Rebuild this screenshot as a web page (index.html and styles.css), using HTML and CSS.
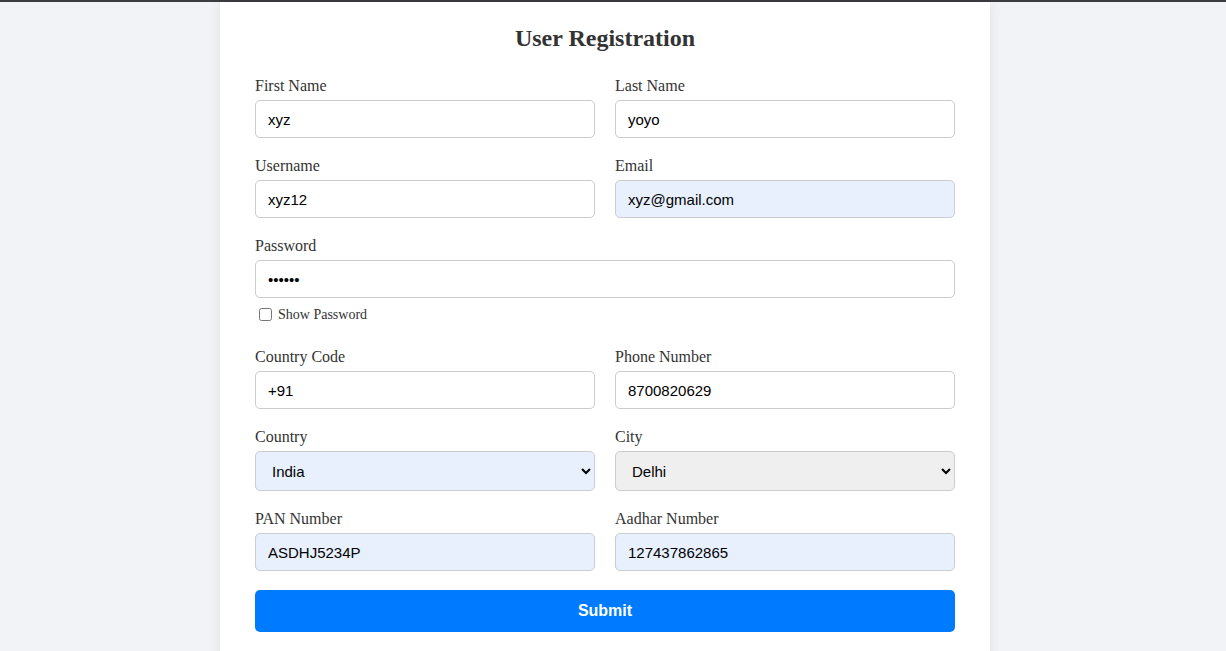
FILE: index.html
```html
<!DOCTYPE html>
<html lang="en">
<head>
<meta charset="utf-8">
<title>User Registration</title>
<link rel="stylesheet" href="styles.css">
</head>
<body>
<div class="topline"></div>
<main class="card">
  <h2 class="title">User Registration</h2>
  <form class="form">
    <div class="group">
      <label class="label">First Name</label>
      <input class="field" type="text" value="xyz">
    </div>
    <div class="group">
      <label class="label">Last Name</label>
      <input class="field" type="text" value="yoyo">
    </div>
    <div class="group">
      <label class="label">Username</label>
      <input class="field" type="text" value="xyz12">
    </div>
    <div class="group">
      <label class="label">Email</label>
      <input class="field filled" type="text" value="xyz@gmail.com">
    </div>
    <div class="group full">
      <label class="label">Password</label>
      <input class="field" type="password" value="secret">
      <div class="show-row">
        <input class="check" type="checkbox" id="show">
        <label class="show-label" for="show">Show Password</label>
      </div>
    </div>
    <div class="group">
      <label class="label">Country Code</label>
      <input class="field" type="text" value="+91">
    </div>
    <div class="group">
      <label class="label">Phone Number</label>
      <input class="field" type="text" value="8700820629">
    </div>
    <div class="group">
      <label class="label">Country</label>
      <select class="field select filled"><option>India</option></select>
    </div>
    <div class="group">
      <label class="label">City</label>
      <select class="field select grey"><option>Delhi</option></select>
    </div>
    <div class="group">
      <label class="label">PAN Number</label>
      <input class="field filled" type="text" value="ASDHJ5234P">
    </div>
    <div class="group">
      <label class="label">Aadhar Number</label>
      <input class="field filled" type="text" value="127437862865">
    </div>
    <div class="group full">
      <button class="submit" type="button">Submit</button>
    </div>
  </form>
</main>
</body>
</html>
```
FILE: styles.css
```css
html, body {
  margin: 0;
  padding: 0;
}
body {
  background: #f2f3f7;
  font-family: "Liberation Serif", "Times New Roman", serif;
  color: #333;
  height: 651px;
  overflow: hidden;
  padding-right: 16px;
}
.topline {
  height: 2px;
  background: #3b3b40;
  margin-right: -16px;
}
.card {
  width: 700px;
  margin: 0 auto;
  background: #fff;
  padding: 22px 35px 40px;
  box-shadow: 0 0 12px rgba(0, 0, 0, 0.08);
}
.title {
  margin: 0 0 25px;
  text-align: center;
  font-size: 24px;
  line-height: 28px;
  font-weight: bold;
  color: #333;
}
.form {
  display: grid;
  grid-template-columns: 1fr 1fr;
  column-gap: 20px;
  row-gap: 19px;
}
.group {
  display: flex;
  flex-direction: column;
}
.full {
  grid-column: 1 / -1;
}
.label {
  font-size: 16px;
  line-height: 18px;
  margin-bottom: 5px;
  color: #333;
}
.field {
  box-sizing: border-box;
  height: 38px;
  width: 100%;
  margin: 0;
  padding: 0 12px;
  border: 1px solid #ccc;
  border-radius: 5px;
  background: #fff;
  font-family: "Liberation Sans", Arial, sans-serif;
  font-size: 15px;
  color: #000;
}
.filled {
  background: #e8f0fe;
}
.select {
  height: 40px;
  padding: 0 8px 0 12px;
}
.grey {
  background: #efefef;
}
.show-row {
  display: flex;
  align-items: center;
  margin-top: 7px;
  margin-bottom: 5px;
}
.check {
  width: 13px;
  height: 13px;
  margin: 3px 3px 3px 4px;
}
.show-label {
  font-size: 14px;
  line-height: 16px;
  margin-left: 3px;
  color: #333;
}
.submit {
  height: 42px;
  border: none;
  border-radius: 5px;
  background: #007bff;
  color: #fff;
  font-family: "Liberation Sans", Arial, sans-serif;
  font-size: 16px;
  font-weight: bold;
}
```
